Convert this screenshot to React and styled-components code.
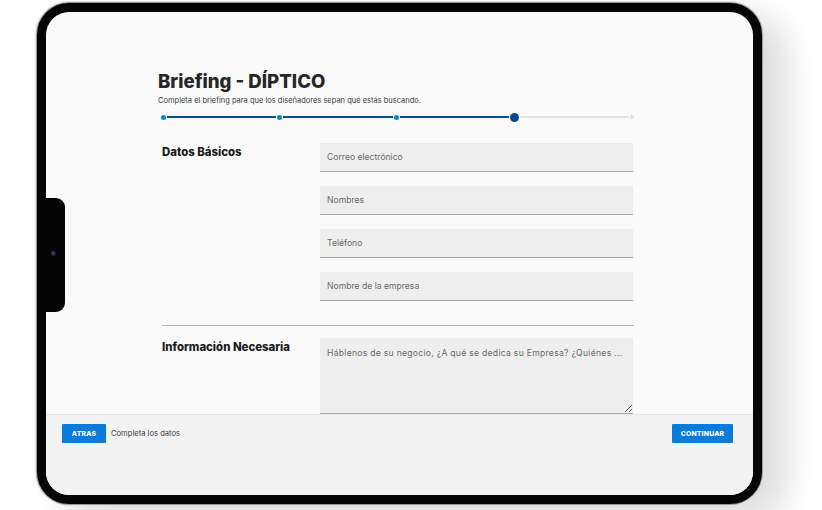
import React from "react";
import styled, { createGlobalStyle } from "styled-components";

const Global = createGlobalStyle`
  html, body { margin: 0; padding: 0; background: #ffffff; }
  body { font-family: Inter, "Noto Sans", sans-serif; }
  * { box-sizing: border-box; }
`;

const Page = styled.div`
  width: 822px;
  height: 510px;
  padding: 3px 0 0 37px;
  overflow: hidden;
`;

const Tablet = styled.div`
  position: relative;
  width: 725px;
  height: 501px;
  border: 9px solid #050505;
  border-radius: 32px;
  background: #050505;
  box-shadow:
    0 0 0 1px #9a9a9a,
    0 0 0 2px #e2e2e2,
    24px 14px 34px rgba(0, 0, 0, 0.14);
`;

const Notch = styled.div`
  position: absolute;
  left: -7px;
  top: 186px;
  width: 26px;
  height: 114px;
  background: #050505;
  border-radius: 0 9px 9px 0;
  display: flex;
  align-items: center;
  justify-content: center;
`;

const Camera = styled.div`
  width: 5px;
  height: 5px;
  border-radius: 50%;
  background: radial-gradient(circle at 40% 40%, #3b4f8c, #101a33 70%);
  margin: -4px 0 0 2px;
`;

const Screen = styled.div`
  width: 100%;
  height: 100%;
  border-radius: 23px;
  overflow: hidden;
  background: #fafafa;
  display: flex;
  flex-direction: column;
`;

const Content = styled.div`
  flex: 1;
  overflow: hidden;
  padding: 57px 0 0 112px;
`;

const Inner = styled.div`
  width: 476px;
`;

const Title = styled.h1`
  margin: 0;
  font-family: Inter, sans-serif;
  font-weight: 800;
  font-size: 18.6px;
  line-height: 24px;
  color: #262626;
`;

const Subtitle = styled.p`
  margin: 3px 0 0;
  font-size: 7.5px;
  line-height: 10px;
  color: #3a3a3a;
`;

const Progress = styled.div`
  display: flex;
  align-items: center;
  height: 10px;
  margin: 6px 0 0 3px;
`;

const Dot = styled.span`
  flex: none;
  width: ${(p) => p.$size}px;
  height: ${(p) => p.$size}px;
  border-radius: 50%;
  background: ${(p) => p.$color};
`;

const Line = styled.span`
  flex: ${(p) => p.$grow};
  height: ${(p) => (p.$done ? 2 : 1.5)}px;
  margin: 0 1px;
  background: ${(p) => (p.$done ? "#0b4d8c" : "#e4e4e4")};
`;

const Section = styled.div`
  display: grid;
  grid-template-columns: 158px 313px;
  padding-left: 4px;
  margin-top: ${(p) => p.$top}px;
`;

const Label = styled.h2`
  margin: 0;
  padding-top: ${(p) => p.$pt}px;
  font-size: 11.4px;
  font-weight: 800;
  line-height: 14px;
  color: #1b1b1b;
`;

const Fields = styled.div`
  display: flex;
  flex-direction: column;
  gap: 14px;
`;

const Input = styled.input`
  display: block;
  width: 100%;
  height: 29px;
  border: none;
  border-bottom: 1px solid #a8a8a8;
  background: #eeeeee;
  padding: 0 7px;
  font-family: Inter, sans-serif;
  font-size: 8.6px;
  color: #333;
  outline: none;
  &::placeholder { color: #6a6a6a; }
`;

const TextArea = styled.textarea`
  display: block;
  width: 100%;
  height: 76px;
  border: none;
  border-bottom: 1px solid #a8a8a8;
  background: #eeeeee;
  padding: 9px 4px 9px 7px;
  font-family: Inter, sans-serif;
  font-size: 8.6px;
  letter-spacing: 0.28px;
  line-height: 12px;
  color: #333;
  resize: vertical;
  outline: none;
  &::placeholder { color: #6a6a6a; }
`;

const Divider = styled.hr`
  margin: 24px 0 0 4px;
  border: none;
  border-top: 1px solid #b4b4b4;
  height: 0;
`;

const Footer = styled.div`
  flex: none;
  height: 81px;
  background: #f3f3f3;
  border-top: 1px solid #e9e9e9;
  display: flex;
  align-items: flex-start;
  padding: 9px 20px 0 16px;
  gap: 5px;
`;

const Button = styled.button`
  height: 19px;
  width: ${(p) => p.$w}px;
  border: none;
  border-radius: 1px;
  background: #0a7bdb;
  color: #fff;
  font-family: Inter, sans-serif;
  font-weight: 800;
  font-size: 6.8px;
  letter-spacing: 0.2px;
  padding: 0;
  margin-left: ${(p) => (p.$right ? "auto" : "0")};
`;

const FooterText = styled.span`
  font-size: 7.6px;
  line-height: 19px;
  color: #3d3d3d;
`;

export default function App() {
  return (
    <Page>
      <Global />
      <Tablet>
        <Screen>
          <Content>
            <Inner>
              <Title>Briefing - DÍPTICO</Title>
              <Subtitle>
                Completa el briefing para que los diseñadores sepan qué estás buscando.
              </Subtitle>
              <Progress>
                <Dot $size={5} $color="#0a84d6" />
                <Line $done $grow={1} />
                <Dot $size={5} $color="#0a84d6" />
                <Line $done $grow={1} />
                <Dot $size={5} $color="#0a84d6" />
                <Line $done $grow={1} />
                <Dot $size={9} $color="#0b4a8a" />
                <Line $grow={1} />
                <Dot $size={4} $color="#e2e2e2" />
              </Progress>
              <Section $top={21}>
                <Label $pt={2}>Datos Básicos</Label>
                <Fields>
                  <Input placeholder="Correo electrónico" />
                  <Input placeholder="Nombres" />
                  <Input placeholder="Teléfono" />
                  <Input placeholder="Nombre de la empresa" />
                </Fields>
              </Section>
              <Divider />
              <Section $top={12}>
                <Label $pt={2}>Información Necesaria</Label>
                <TextArea placeholder="Háblenos de su negocio, ¿A qué se dedica su Empresa? ¿Quiénes ..." />
              </Section>
            </Inner>
          </Content>
          <Footer>
            <Button $w={44}>ATRAS</Button>
            <FooterText>Completa los datos</FooterText>
            <Button $w={61} $right>CONTINUAR</Button>
          </Footer>
        </Screen>
        <Notch>
          <Camera />
        </Notch>
      </Tablet>
    </Page>
  );
}
